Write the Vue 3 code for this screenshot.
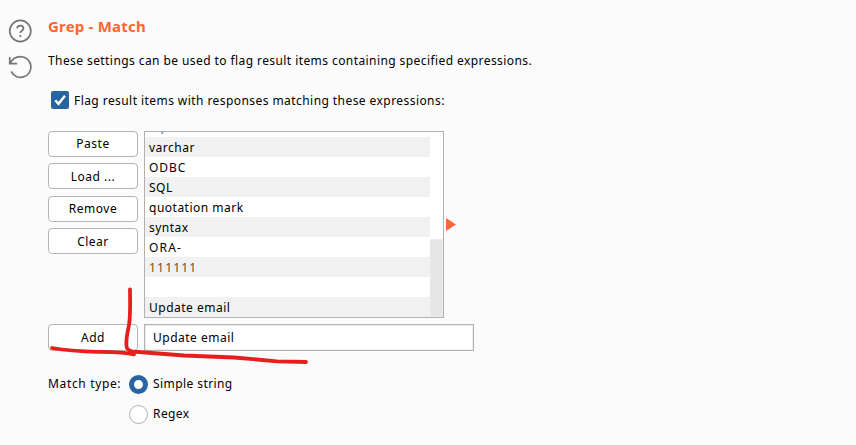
<script setup>
import { ref } from 'vue'

const actions = ['Paste', 'Load ...', 'Remove', 'Clear']
const expressions = [
  { text: 'input', partial: true },
  { text: 'varchar' },
  { text: 'ODBC' },
  { text: 'SQL' },
  { text: 'quotation mark' },
  { text: 'syntax' },
  { text: 'ORA-' },
  { text: '111111', number: true },
  { text: '' },
  { text: 'Update email' }
]
const draft = ref('Update email')
const matchType = ref('Simple string')
</script>

<template>
  <main class="panel">
    <aside class="tools">
      <svg class="tool" viewBox="-0.8 -0.5 25 25">
        <circle cx="12" cy="12" r="11" />
        <path d="M8.7 9.3C8.8 7.500 10 6.500 12 6.500s3.300 1.100 3.300 2.800c0 2.400-3.300 2.400-3.300 4.700" />
        <circle class="dot" cx="12" cy="17.3" r="1.2" />
      </svg>
      <svg class="tool" viewBox="-0.8 -0.5 25 25">
        <path d="M1 1.5V8.500H8.700M1.400 8.300C3.5 4 7.5 1.200 12.300 1.200a10.800 10.800 0 1 1-9.800 15.300" />
      </svg>
    </aside>
    <section class="content">
      <h1>Grep - Match</h1>
      <p class="intro">These settings can be used to flag result items containing specified expressions.</p>
      <label class="flag">
        <span class="check"><svg viewBox="0 0 18 18"><path d="M4.3 9.2l3.2 3.6L14 4.7" /></svg></span>
        <span class="flag-text">Flag result items with responses matching these expressions:</span>
      </label>
      <div class="editor">
        <div class="actions">
          <button v-for="a in actions" :key="a">{{ a }}</button>
        </div>
        <div class="list">
          <ul>
            <li v-for="(e, i) in expressions" :key="i" :class="{ number: e.number, partial: e.partial }">{{ e.text }}</li>
          </ul>
          <div class="track"><div class="thumb"></div></div>
        </div>
        <svg class="arrow" viewBox="0 0 10 13"><path d="M0 0L10 6.5L0 13Z" /></svg>
      </div>
      <div class="add">
        <button>Add</button>
        <input v-model="draft" type="text" />
      </div>
      <div class="match">
        <span class="match-label">Match type:</span>
        <div class="options">
          <label v-for="o in ['Simple string', 'Regex']" :key="o" @click="matchType = o">
            <span class="radio" :class="{ on: matchType === o }"></span><span>{{ o }}</span>
          </label>
        </div>
      </div>
    </section>
    <svg class="marks" viewBox="0 0 856 445">
      <path d="M52 348C66 350.500 82 351.500 98 351.800C112 352 124 352 134 354.300" />
      <path d="M130 289.500C130 302 130.700 316 129 325C127 335 125 343 127 348C129 352 133 351.500 139 352L184 355.500L234 357.500L277 361.300L306 362" />
    </svg>
  </main>
</template>

<style>
body { background: #fbfbfb; }
</style>

<style scoped>
.panel {
  position: relative;
  box-sizing: border-box;
  width: 856px;
  height: 445px;
  display: flex;
  overflow: hidden;
  background: #fbfbfb;
  color: #000;
  font: 12px/20px "Noto Sans", "Open Sans", sans-serif;
  letter-spacing: 0.42px;
}
.tools {
  width: 48px;
  box-sizing: border-box;
  padding: 19px 0 0 8px;
  display: flex;
  flex-direction: column;
  gap: 12px;
}
.tool { width: 24px; height: 24px; fill: none; stroke: #777; stroke-width: 1.8; overflow: visible; }
.tool .dot { fill: #777; stroke: none; }
.content { flex: 1; padding-top: 15px; }
h1 { margin: 0; font-size: 15px; line-height: 22px; font-weight: 700; color: #ff6633; letter-spacing: 0.2px; }
.intro { margin: 14px 0 0; line-height: 20px; white-space: nowrap; }
.flag { display: flex; align-items: center; gap: 5px; margin: 19px 0 0 3px; height: 20px; }
.flag-text { padding-top: 2px; letter-spacing: 0.435px; }
.check { width: 18px; height: 18px; border-radius: 2px; background: #26659f; }
.check svg { display: block; width: 18px; fill: none; stroke: #fff; stroke-width: 2.4; }
.editor { display: flex; margin-top: 21px; height: 187px; }
.actions { width: 96px; display: flex; flex-direction: column; gap: 6.4px; }
button {
  box-sizing: border-box;
  width: 90px;
  height: 26px;
  padding: 0;
  border: 1px solid #b8b4b4;
  border-radius: 4px;
  background: #fff;
  color: #000;
  font: inherit;
  letter-spacing: 0.5px;
}
.actions button:nth-child(even) { padding-top: 2px; }
.list { box-sizing: border-box; width: 300px; border: 1px solid #b4b0b2; background: #fff; display: flex; overflow: hidden; letter-spacing: 0.5px; }
ul { list-style: none; width: 285px; margin: -15px 0 0; padding: 0; }
li { box-sizing: border-box; height: 20px; padding: 1px 0 0 4px; white-space: nowrap; }
li:nth-child(even) { background: #f1f1f1; }
li:nth-child(3) { letter-spacing: 0.9px; }
li:nth-child(7) { letter-spacing: 1.2px; }
li.number { color: #7a4a1c; letter-spacing: 1.2px; }
li.partial { padding-top: 0; color: #26659f; }
.track { flex: 1; display: flex; align-items: flex-end; }
.thumb { width: 100%; height: 78px; box-sizing: border-box; border: 1px solid #ececec; background: #e5e5e5; }
.arrow { width: 10px; height: 13px; margin: 87px 0 0 2px; fill: #ff6633; }
.add { display: flex; gap: 6px; margin-top: 6px; }
.add button { height: 27px; }
input {
  box-sizing: border-box;
  width: 330px;
  height: 27px;
  padding: 0 8px;
  border: 1px solid #b4b0b2;
  box-shadow: inset 0 0 0 1px #eee;
  outline: none;
  background: #fff;
  color: #000;
  font: inherit;
  letter-spacing: 0.5px;
}
.match { display: flex; margin-top: 23px; }
.match-label { width: 81px; letter-spacing: 0.65px; }
.options { display: flex; flex-direction: column; gap: 10px; }
.options label { display: flex; align-items: center; height: 20px; gap: 5px; }
.radio { box-sizing: border-box; width: 19px; height: 19px; border: 1px solid #b0b0b0; border-radius: 50%; background: #fff; }
.radio.on { border: 5px solid #26659f; }
.marks { position: absolute; inset: 0; width: 856px; height: 445px; pointer-events: none; fill: none; stroke: #e81e1e; stroke-width: 3.8; stroke-linecap: round; stroke-linejoin: round; }
</style>
